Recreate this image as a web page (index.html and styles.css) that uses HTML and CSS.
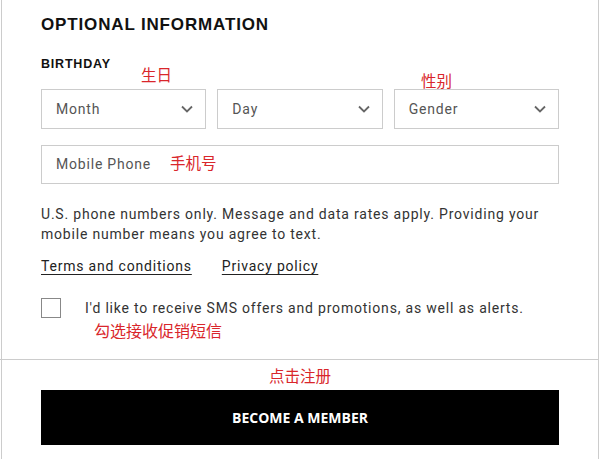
FILE: index.html
```html
<!DOCTYPE html>
<html lang="en">
<head>
    <meta charset="UTF-8">
    <meta name="viewport" content="width=device-width, initial-scale=1.0">
    <title>Optional Information</title>
    <link rel="stylesheet" href="styles.css">
</head>
<body>
    <div class="card">
        <div class="card-body">
            <h2>Optional Information</h2>
            <div class="field-label">Birthday</div>
            <div class="select-row">
                <div class="select-box">
                    <span>Month</span>
                    <svg class="chevron" viewBox="0 0 12 8"><path d="M1 1.5l5 5 5-5"/></svg>
                </div>
                <div class="select-box">
                    <span>Day</span>
                    <svg class="chevron" viewBox="0 0 12 8"><path d="M1 1.5l5 5 5-5"/></svg>
                </div>
                <div class="select-box">
                    <span>Gender</span>
                    <svg class="chevron" viewBox="0 0 12 8"><path d="M1 1.5l5 5 5-5"/></svg>
                </div>
                <span class="note note-birthday">生日</span>
                <span class="note note-gender">性别</span>
            </div>
            <div class="text-box">
                <span>Mobile Phone</span>
                <span class="note-inline">手机号</span>
            </div>
            <p class="disclaimer">U.S. phone numbers only. Message and data rates apply. Providing your mobile number means you agree to text.</p>
            <div class="links">
                <a href="#">Terms and conditions</a>
                <a href="#">Privacy policy</a>
            </div>
            <div class="check-row">
                <span class="checkbox"></span>
                <div class="check-text">
                    <span>I'd like to receive SMS offers and promotions, as well as alerts.</span>
                    <span class="note-block">勾选接收促销短信</span>
                </div>
            </div>
        </div>
        <div class="card-footer">
            <div class="note-center">点击注册</div>
            <button type="button">Become a Member</button>
        </div>
    </div>
</body>
</html>
```

FILE: styles.css
```css
body {
    margin: 0;
    background: #fff;
    font-family: Roboto, 'Liberation Sans', Arial, sans-serif;
    color: #333;
}

.card {
    box-sizing: border-box;
    width: 598px;
    height: 459px;
    margin-left: 1px;
    border-left: 1px solid #ccc;
    border-right: 1px solid #ccc;
}

.card-body {
    padding: 15px 39px 0;
}

.card-body h2 {
    margin: 0;
    font-family: 'Liberation Sans', Arial, sans-serif;
    font-size: 17px;
    line-height: 20px;
    font-weight: bold;
    letter-spacing: 0.85px;
    text-transform: uppercase;
    color: #111;
}

.field-label {
    margin-top: 21px;
    font-family: 'Liberation Sans', Arial, sans-serif;
    font-size: 12.5px;
    line-height: 16px;
    font-weight: bold;
    letter-spacing: 0.8px;
    text-transform: uppercase;
    color: #111;
}

.select-row {
    position: relative;
    display: flex;
    gap: 11px;
    margin-top: 17px;
}

.select-box, .text-box {
    box-sizing: border-box;
    display: flex;
    align-items: center;
    height: 40px;
    padding: 0 14px 1px;
    border: 1px solid #ccc;
    font-size: 14px;
    color: #555;
    letter-spacing: 0.8px;
}

.select-box {
    flex: 1;
    justify-content: space-between;
}

.chevron {
    width: 12px;
    height: 8px;
    fill: none;
    stroke: #666;
    stroke-width: 1.8;
    margin-right: -2px;
}

.note, .note-inline, .note-block, .note-center {
    font-family: 'Noto Sans CJK SC', sans-serif;
    font-size: 15.5px;
    line-height: 18px;
    color: #d9262b;
    letter-spacing: 0;
}

.note {
    position: absolute;
}

.note-birthday {
    left: 100px;
    top: -24px;
}

.note-gender {
    left: 380px;
    top: -18px;
}

.text-box {
    margin-top: 16px;
    height: 39px;
    padding-bottom: 2px;
}

.note-inline {
    margin: -4px 0 0 19px;
}

.disclaimer {
    margin: 20px 0 0;
    font-size: 14px;
    line-height: 20px;
    letter-spacing: 0.8px;
    color: #333;
}

.links {
    display: flex;
    gap: 30px;
    margin-top: 12px;
    font-size: 14px;
    line-height: 20px;
    letter-spacing: 0.8px;
}

.links a {
    color: #222;
    text-decoration: underline;
    text-underline-offset: 3px;
}

.check-row {
    display: flex;
    gap: 24px;
    margin-top: 22px;
    height: 61px;
}

.checkbox {
    flex: none;
    box-sizing: border-box;
    width: 20px;
    height: 20px;
    border: 1px solid #888;
}

.check-text {
    display: flex;
    flex-direction: column;
    align-items: flex-start;
    font-size: 14px;
    line-height: 20px;
    letter-spacing: 0.8px;
    color: #333;
}

.note-block {
    margin: 3px 0 0 9px;
    font-size: 16px;
}

.card-footer {
    border-top: 1px solid #ccc;
    margin-left: -2px;
    padding: 6px 39px 0 41px;
}

.note-center {
    text-align: center;
}

button {
    display: block;
    width: 100%;
    height: 55px;
    margin-top: 6px;
    border: none;
    background: #000;
    color: #fff;
    font-family: 'Open Sans', 'Liberation Sans', sans-serif;
    font-size: 14px;
    font-weight: bold;
    letter-spacing: 0;
    text-transform: uppercase;
}
```
